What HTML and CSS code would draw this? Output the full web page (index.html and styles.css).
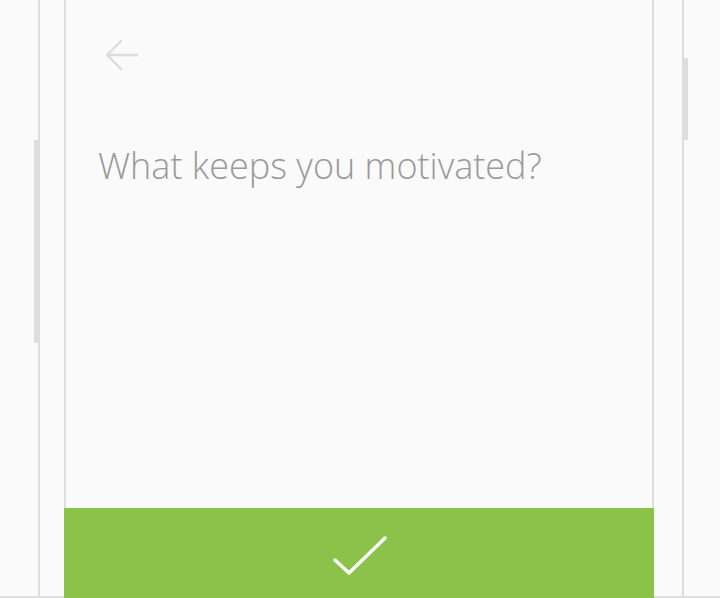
FILE: index.html
```html
<!DOCTYPE html>
<html lang="en">
<head>
<meta charset="utf-8">
<title>What keeps you motivated?</title>
<link rel="stylesheet" href="styles.css">
</head>
<body>
<div class="stage">
  <div class="side side-left">
    <div class="edge edge-left"></div>
    <div class="thumb thumb-left"></div>
  </div>
  <main class="panel">
    <div class="panel-body">
      <button class="back" aria-label="Back">
        <svg width="34" height="32" viewBox="0 0 34 32" fill="none" stroke="#dcdcdc" stroke-width="2.4" stroke-linecap="round" stroke-linejoin="round">
          <path d="M32 16H3"/>
          <path d="M16 2L2 16l14 14"/>
        </svg>
      </button>
      <h1 class="question">What keeps you motivated?</h1>
    </div>
    <button class="confirm" aria-label="Confirm">
      <svg width="56" height="42" viewBox="0 0 56 42" fill="none" stroke="#ffffff" stroke-width="3.4" stroke-linecap="round" stroke-linejoin="round">
        <path d="M3 26l14 13L53 4"/>
      </svg>
    </button>
  </main>
  <div class="side side-right">
    <div class="edge edge-right"></div>
    <div class="thumb thumb-right"></div>
  </div>
</div>
</body>
</html>
```

FILE: styles.css
```css
* { box-sizing: border-box; }

html, body {
  margin: 0;
  padding: 0;
  background: #fafafa;
}

.stage {
  display: flex;
  width: 720px;
  height: 598px;
  overflow: hidden;
}

.side {
  position: relative;
  display: flex;
  border-bottom: 2px solid #dedede;
}

.side-left {
  width: 64px;
  justify-content: flex-start;
}

.side-right {
  flex: 1;
  padding-left: 28px;
}

.edge {
  width: 2px;
  background: #dedede;
}

.edge-left {
  margin-left: 38px;
}

.thumb {
  position: absolute;
  background: #dedede;
}

.thumb-left {
  left: 34px;
  top: 140px;
  width: 4px;
  height: 203px;
}

.thumb-right {
  left: 29px;
  top: 58px;
  width: 5px;
  height: 82px;
}

.panel {
  width: 590px;
  display: flex;
  flex-direction: column;
}

.panel-body {
  flex: 1;
  border-left: 2px solid #dedede;
  border-right: 2px solid #dedede;
  padding: 39px 0 0 32px;
}

.back {
  display: block;
  padding: 0;
  margin: 0 0 0 7px;
  border: 0;
  background: none;
  width: 34px;
  height: 32px;
}

.back svg { display: block; }

.question {
  margin: 73px 0 0 0;
  font-family: "Open Sans", "Noto Sans", sans-serif;
  font-weight: 300;
  font-size: 36px;
  line-height: 44px;
  color: #999999;
  letter-spacing: 0;
}

.confirm {
  height: 90px;
  border: 0;
  margin: 0;
  padding: 0;
  background: #8bc34a;
  display: flex;
  align-items: center;
  justify-content: center;
}

.confirm svg {
  display: block;
  margin-left: 1px;
  margin-top: 3px;
}
```
